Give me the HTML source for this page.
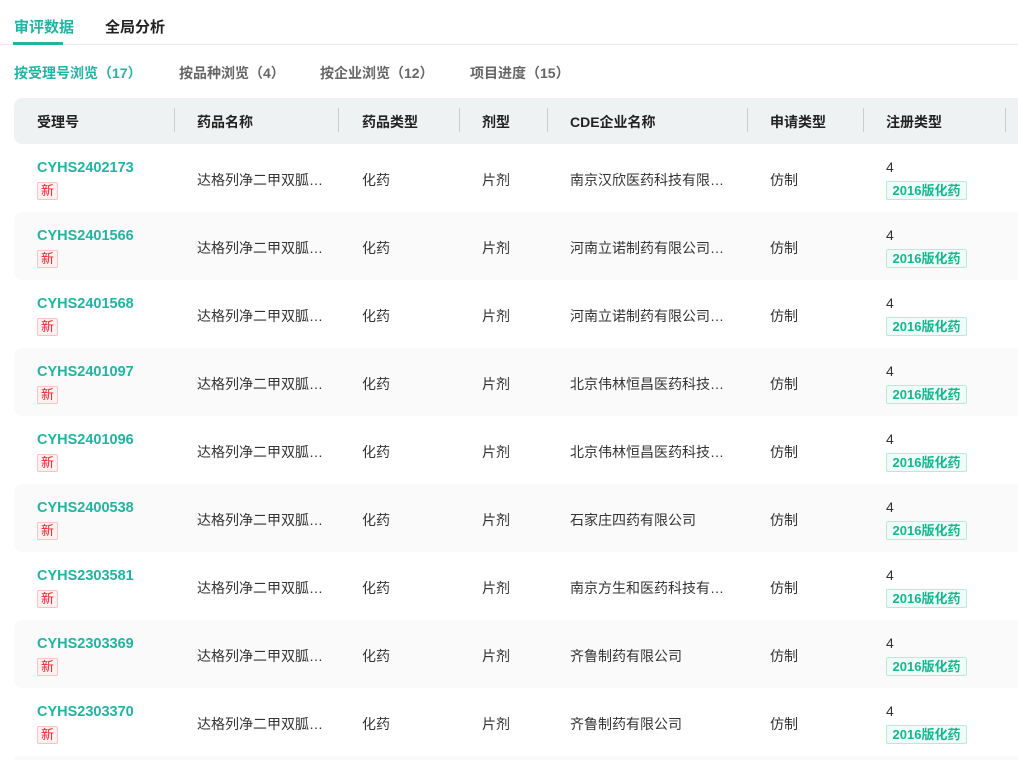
<!DOCTYPE html><html><head><meta charset="utf-8"><style>
*{margin:0;padding:0;box-sizing:border-box}
html,body{width:1018px;height:760px;overflow:hidden}
body{background:#fff;font-family:"Liberation Sans","Noto Sans CJK SC",sans-serif;color:#333;position:relative}
.a{position:absolute;white-space:nowrap}
.tabs{position:absolute;left:0;top:0;width:1018px;height:45px;border-bottom:1px solid #e8eaec}
.t{font-size:15px;font-weight:bold;top:16px}
.sub{font-size:14px;top:63px;color:#666;font-weight:bold}
.hd{position:absolute;left:14px;top:98px;width:1004px;height:46px;background:#eff2f3;border-radius:8px 0 0 8px}
.hd .a{font-size:14px;font-weight:bold;color:#222;top:14px}
.sep{position:absolute;top:10px;width:1px;height:24px;background:#c9cfd1}
.row{position:absolute;left:14px;width:1004px;height:68px;border-radius:8px 0 0 8px}
.row .a{font-size:14px;color:#333}
.id{color:#1fb5a3!important;font-weight:bold;top:16px;font-size:14.5px!important}
.new{position:absolute;left:23px;top:38px;width:21px;height:18px;border:1px solid #ffc2c2;background:#fff1f1;color:#f5222d;font-size:13px;line-height:16px;text-align:center;border-radius:2px}
.g{position:absolute;left:872px;top:37px;width:81px;height:19px;border:1px solid #b5ecd9;background:#effcf7;color:#14b88f;font-size:13px;font-weight:bold;line-height:17px;text-align:center;border-radius:2px}
</style></head><body>
<div class="tabs"></div>
<div class="a t" style="left:14px;color:#1fb5a3">审评数据</div>
<div style="position:absolute;left:13px;top:42px;width:50px;height:3px;background:#1fb5a3"></div>
<div class="a t" style="left:105px;color:#222">全局分析</div>
<div class="a sub" style="left:14px;color:#1fb5a3">按受理号浏览（17）</div>
<div class="a sub" style="left:179px">按品种浏览（4）</div>
<div class="a sub" style="left:320px">按企业浏览（12）</div>
<div class="a sub" style="left:470px">项目进度（15）</div>
<div class="hd">
<div class="a" style="left:23px">受理号</div><div class="sep" style="left:160px"></div>
<div class="a" style="left:183px">药品名称</div><div class="sep" style="left:324px"></div>
<div class="a" style="left:348px">药品类型</div><div class="sep" style="left:445px"></div>
<div class="a" style="left:468px">剂型</div><div class="sep" style="left:533px"></div>
<div class="a" style="left:556px">CDE企业名称</div><div class="sep" style="left:733px"></div>
<div class="a" style="left:756px">申请类型</div><div class="sep" style="left:849px"></div>
<div class="a" style="left:872px">注册类型</div><div class="sep" style="left:991px"></div>
</div>
<div id="rows"></div>
<div style="position:absolute;left:14px;top:756px;width:1004px;height:4px;background:#fafafa;border-radius:8px 0 0 0"></div>
<script>
var d=[["CYHS2402173","南京汉欣医药科技有限…"],["CYHS2401566","河南立诺制药有限公司…"],["CYHS2401568","河南立诺制药有限公司…"],["CYHS2401097","北京伟林恒昌医药科技…"],["CYHS2401096","北京伟林恒昌医药科技…"],["CYHS2400538","石家庄四药有限公司"],["CYHS2303581","南京方生和医药科技有…"],["CYHS2303369","齐鲁制药有限公司"],["CYHS2303370","齐鲁制药有限公司"]];
var h="";d.forEach(function(r,i){h+='<div class="row" style="top:'+(144+i*68)+'px;background:'+(i%2?'#fafafa':'#fff')+'"><div class="a id" style="left:23px">'+r[0]+'</div><div class="new">新</div><div class="a" style="left:183px;top:26px">达格列净二甲双胍…</div><div class="a" style="left:348px;top:26px">化药</div><div class="a" style="left:468px;top:26px">片剂</div><div class="a" style="left:556px;top:26px">'+r[1]+'</div><div class="a" style="left:756px;top:26px">仿制</div><div class="a" style="left:872px;top:15px">4</div><div class="g">2016版化药</div></div>';});
document.getElementById("rows").innerHTML=h;
</script>
</body></html>
